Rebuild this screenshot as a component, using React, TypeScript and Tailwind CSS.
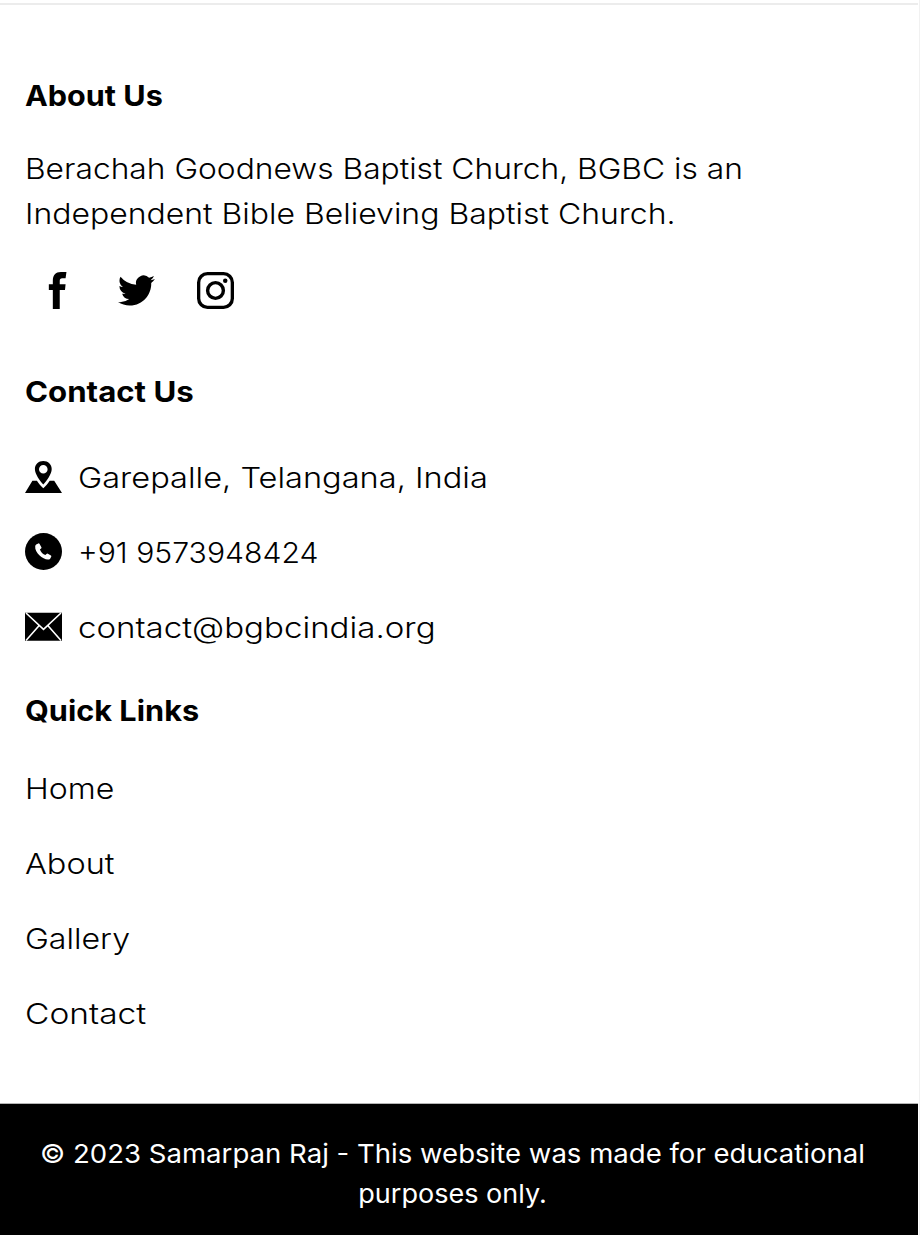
import type { ReactNode } from "react";

function Heading({ children, className }: { children: ReactNode; className: string }) {
  return (
    <h2 className={`h-[45px] origin-left whitespace-nowrap text-[29px] leading-[45px] font-bold ${className}`}>{children}</h2>
  );
}

function Facebook() {
  return (
    <svg viewBox="0 0 38 38" className="size-[37px]" aria-label="Facebook">
      <path d="M14.2 38V18.6H10.1V12.6H14.2V8.8C14.2 3.2 17.1 0 22.4 0H28.2L27.3 6.3H23.8C22 6.3 21.3 7.2 21.3 9.2V12.6H27.3L26.7 18.6H21.3V38Z" />
    </svg>
  );
}

function Twitter() {
  return (
    <svg viewBox="0 0 24 24" className="size-[37px]" aria-label="Twitter">
      <path d="M23.95 4.57a10 10 0 0 1-2.82.77 4.96 4.96 0 0 0 2.16-2.72 9.9 9.9 0 0 1-3.12 1.19 4.92 4.92 0 0 0-8.38 4.48A13.93 13.93 0 0 1 1.64 3.16a4.92 4.92 0 0 0 1.52 6.57 4.9 4.9 0 0 1-2.23-.61v.06a4.92 4.92 0 0 0 3.95 4.83 5 5 0 0 1-2.21.08 4.94 4.94 0 0 0 4.6 3.42A9.87 9.87 0 0 1 0 19.54a13.94 13.94 0 0 0 7.55 2.21c9.05 0 14-7.5 14-13.98 0-.21 0-.42-.02-.63a9.94 9.94 0 0 0 2.42-2.57z" />
    </svg>
  );
}

function Instagram() {
  return (
    <svg viewBox="0 0 38 38" className="size-[37px]" fill="none" stroke="currentColor" aria-label="Instagram">
      <rect x="1.7" y="1.7" width="34.6" height="34.6" rx="9" strokeWidth="3.4" />
      <circle cx="19" cy="19" r="8.1" strokeWidth="3.5" />
      <circle cx="29" cy="9" r="2.3" fill="currentColor" stroke="none" />
    </svg>
  );
}

function Pin() {
  return (
    <svg viewBox="0 0 37 37" className="-mt-0.5 size-[37px]" aria-hidden="true">
      <path fillRule="evenodd" d="M18.3 2.9C23.1 2.9 26.7 6.4 26.7 10.9C26.7 15.8 21.8 22.6 18.3 26.6C14.8 22.6 9.9 15.8 9.9 10.9C9.9 6.4 13.5 2.9 18.3 2.9ZM18.3 7A4.3 4.3 0 1 0 18.3 15.6A4.3 4.3 0 0 0 18.3 7Z" />
      <path d="M0 35L7.4 22.7H11.9C13.7 25.5 15.8 27.8 18.3 30.2C20.8 27.8 22.9 25.5 24.7 22.7H29.2L37 35Z" />
    </svg>
  );
}

function Phone() {
  return (
    <svg viewBox="0 0 37 37" className="-mt-0.5 size-[37px]" aria-hidden="true">
      <circle cx="18.5" cy="18.5" r="18.5" />
      <path fill="white" d="M11.2 11.6L13.3 10.4Q14.1 10.1 14.6 10.9L16.4 14.2Q16.8 15 16.1 15.5L14.9 16.4C15.8 19 17.9 21.1 20.4 22.1L21.5 20.9Q22.1 20.3 22.9 20.7L25.9 22.5Q26.6 23 26.2 23.8L25 25.9C20.7 28.7 9.4 20.6 10.2 13.2Q10.3 12.1 11.2 11.6Z" />
    </svg>
  );
}

function Mail() {
  return (
    <svg viewBox="0 0 37 37" className="-mt-0.5 size-[37px]" aria-hidden="true">
      <path d="M0 4.7H37V32.8H0Z" />
      <path fill="none" stroke="white" strokeWidth="1.6" d="M1 5L18.5 21.3L36 5M1 32.5L14.2 17.5M36 32.5L22.8 17.5" />
    </svg>
  );
}

const contacts = [
  { icon: <Pin />, text: "Garepalle, Telangana, India", width: "scale-x-[1.123]" },
  { icon: <Phone />, text: "+91 9573948424", width: "scale-x-[1.04]" },
  { icon: <Mail />, text: "contact@bgbcindia.org", width: "scale-x-[1.14]" },
];

const links = [
  { text: "Home", width: "scale-x-[1.105]" },
  { text: "About", width: "scale-x-[1.12]" },
  { text: "Gallery", width: "scale-x-[1.107]" },
  { text: "Contact", width: "scale-x-[1.155]" },
];

export default function App() {
  return (
    <div className="flex h-[1235px] w-[920px] overflow-hidden bg-white font-['Inter',sans-serif] text-black">
      <footer className="flex w-[918px] flex-col">
        <div className="mt-[3px] h-[2px] shrink-0 bg-[#ececec]" />
        <div className="h-[1098px] shrink-0 pt-[68px] pr-[25px] pl-[24.5px]">
          <section>
            <Heading className="scale-x-[1.054]">About Us</Heading>
            <p className="mt-[28px] text-[29px] leading-[45px] font-light whitespace-nowrap">
              <span className="block origin-left scale-x-[1.095]">Berachah Goodnews Baptist Church, BGBC is an</span>
              <span className="block origin-left scale-x-[1.102]">Independent Bible Believing Baptist Church.</span>
            </p>
            <div className="mt-[36px] ml-[14.5px] flex gap-[42px]">
              <Facebook />
              <Twitter />
              <Instagram />
            </div>
          </section>
          <section className="mt-[60px]">
            <Heading className="scale-x-[1.075]">Contact Us</Heading>
            <ul className="mt-[41px] flex flex-col gap-[30px]">
              {contacts.map((c) => (
                <li key={c.text} className="flex h-[45px] items-center gap-4 text-[29px] leading-[45px] font-light whitespace-nowrap">
                  {c.icon}
                  <span className={`origin-left ${c.width}`}>{c.text}</span>
                </li>
              ))}
            </ul>
          </section>
          <section className="mt-[38px]">
            <Heading className="scale-x-[1.058]">Quick Links</Heading>
            <ul className="mt-[33px] flex flex-col gap-[30px]">
              {links.map((l) => (
                <li key={l.text} className="text-[29px] leading-[45px] font-light">
                  <a href="#" className={`block origin-left ${l.width}`}>{l.text}</a>
                </li>
              ))}
            </ul>
          </section>
        </div>
        <div className="flex-1 border-t border-[#b5b5b5] bg-black pt-[30px] pr-[13px] text-center text-[26px] leading-[40px] whitespace-nowrap text-white">
          <p className="scale-x-[1.06]">© 2023 Samarpan Raj - This website was made for educational</p>
          <p className="scale-x-[1.04]">purposes only.</p>
        </div>
      </footer>
      <div className="ml-px w-px bg-[#f1f1f1]" />
    </div>
  );
}
